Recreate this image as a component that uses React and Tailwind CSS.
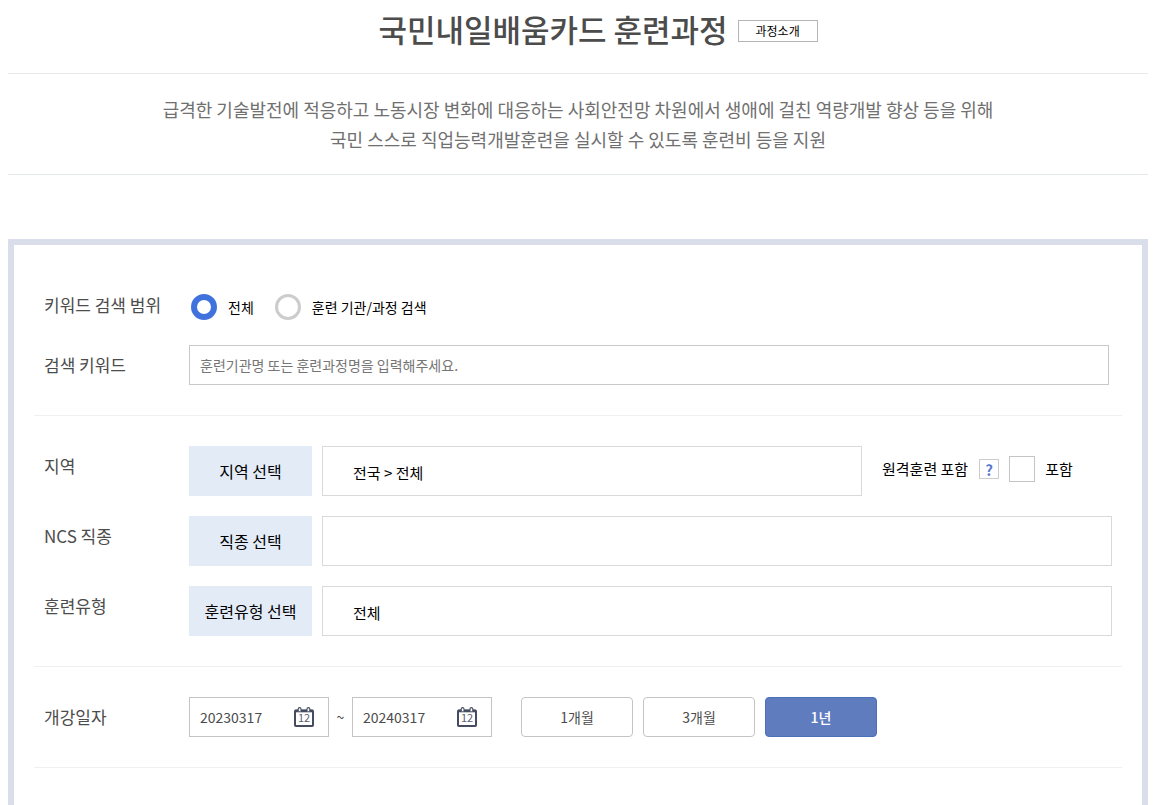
import { useState } from "react";

function CalendarIcon() {
  return (
    <svg width="20" height="20" viewBox="0 0 20 20" fill="none" aria-hidden="true">
      <rect x="1" y="3.5" width="18" height="15.5" rx="0.8" stroke="#454c5f" strokeWidth="2" />
      <path d="M1 4h18" stroke="#454c5f" strokeWidth="2.6" />
      <path d="M4.2 4.2V2a1.4 1.4 0 0 1 2.8 0v2.2M13 4.2V2a1.4 1.4 0 0 1 2.8 0v2.2" fill="#fff" stroke="#454c5f" strokeWidth="1.1" />
      <text x="10" y="15.4" textAnchor="middle" fontSize="11" fill="#5a6172">12</text>
    </svg>
  );
}

function Section({ className = "", children }) {
  return (
    <div className={`flex flex-col gap-5 border-b border-[#f0f0f0] pb-[30px] pl-[10px] ${className}`}>
      {children}
    </div>
  );
}

function Row({ label, htmlFor, children }) {
  const style = "h-10 w-[145px] shrink-0 text-[17px] leading-10 text-[#4c4c4c]";
  return (
    <div className="flex">
      {htmlFor ? (
        <label htmlFor={htmlFor} className={style}>{label}</label>
      ) : (
        <div className={style}>{label}</div>
      )}
      {children}
    </div>
  );
}

function SelectRow({ label, button, value, children }) {
  return (
    <Row label={label}>
      <div className="flex min-w-0 flex-1 pr-[10px]">
        <button type="button" className="h-[50px] w-[123px] shrink-0 bg-[#e3ebf7] text-[16px] text-black">
          {button}
        </button>
        <div className="ml-[10px] flex h-[50px] min-w-0 flex-1 items-center border border-[#d9d9d9] px-[30px] pt-1 text-[15px] text-black">
          {value}
        </div>
        {children}
      </div>
    </Row>
  );
}

function Radio({ label, checked, onChange }) {
  return (
    <label className="flex items-center gap-[11px] text-[14px] text-black">
      <input
        type="radio"
        name="scope"
        checked={checked}
        onChange={onChange}
        className="size-[26px] appearance-none rounded-full border-[3px] border-[#cccccc] bg-white checked:border-[6px] checked:border-[#4072dd]"
      />
      {label}
    </label>
  );
}

function DateField({ name, initial }) {
  return (
    <div className="flex h-10 w-[140px] items-center border border-[#c4c4c4] pr-[14px] pl-[10px]">
      <input
        type="text"
        aria-label={name}
        defaultValue={initial}
        className="min-w-0 flex-1 text-[14px] text-[#4c4c4c] outline-none"
      />
      <button type="button" aria-label={`${name} 달력`} className="shrink-0">
        <CalendarIcon />
      </button>
    </div>
  );
}

const PERIODS = ["1개월", "3개월", "1년"];

export default function App() {
  const [scope, setScope] = useState("all");
  const [period, setPeriod] = useState("1년");

  return (
    <main className="flex min-h-screen flex-col bg-white pr-[9px] pl-2 font-['Noto_Sans_CJK_KR',sans-serif]">
      <header className="flex h-[74px] items-start justify-center gap-[10px] border-b border-[#e9eaec] pt-[6px] pl-10">
        <h1 className="text-[31px] leading-[46px] font-medium text-[#4c4c4c]">국민내일배움카드 훈련과정</h1>
        <button type="button" className="mt-[14px] flex h-[22px] w-20 items-center justify-center border border-[#b5b5b5] text-[12px] text-black">
          과정소개
        </button>
      </header>

      <p className="border-b border-[#e3e8eb] py-5 text-center text-[18px] leading-[30px] text-[#707070]">
        급격한 기술발전에 적응하고 노동시장 변화에 대응하는 사회안전망 차원에서 생애에 걸친 역량개발 향상 등을 위해
        <br />
        국민 스스로 직업능력개발훈련을 실시할 수 있도록 훈련비 등을 지원
      </p>

      <form className="mt-16 flex-1 border-6 border-b-0 border-[#d9deea] px-5" onSubmit={(e) => e.preventDefault()}>
        <Section className="pt-10">
          <Row label="키워드 검색 범위">
            <div className="flex items-center gap-[21px] pt-1 pl-[2px]">
              <Radio label="전체" checked={scope === "all"} onChange={() => setScope("all")} />
              <Radio label="훈련 기관/과정 검색" checked={scope === "org"} onChange={() => setScope("org")} />
            </div>
          </Row>
          <Row label="검색 키워드" htmlFor="keyword">
            <div className="min-w-0 flex-1 pr-[13px]">
              <input
                id="keyword"
                type="text"
                placeholder="훈련기관명 또는 훈련과정명을 입력해주세요."
                className="h-10 w-full border border-[#c9c9c9] px-[10px] text-[14px] text-[#4c4c4c] outline-none placeholder:text-[#757575]"
              />
            </div>
          </Row>
        </Section>

        <Section className="pt-[30px]">
          <SelectRow label="지역" button="지역 선택" value="전국 > 전체">
            <div className="flex w-[250px] shrink-0 items-center pb-1 pl-5 text-[15px] text-black">
              <span>원격훈련 포함</span>
              <button type="button" aria-label="원격훈련 안내" className="ml-[11px] flex size-5 items-center justify-center border border-[#cccccc] text-[15px] leading-none font-bold text-[#5b78d0]">
                ?
              </button>
              <label className="ml-[10px] flex items-center gap-[10px]">
                <input type="checkbox" className="size-[26px] appearance-none border border-[#c4c4c4] bg-white checked:bg-[#4072dd]" />
                포함
              </label>
            </div>
          </SelectRow>
          <SelectRow label="NCS 직종" button="직종 선택" value="" />
          <SelectRow label="훈련유형" button="훈련유형 선택" value="전체" />
        </Section>

        <Section className="pt-[30px]">
          <Row label="개강일자">
            <div className="flex items-center text-[14px] text-[#4c4c4c]">
              <DateField name="시작일" initial="20230317" />
              <span className="w-[23px] text-center">~</span>
              <DateField name="종료일" initial="20240317" />
              <div className="ml-[29px] flex gap-[10px]">
                {PERIODS.map((item) => (
                  <button
                    key={item}
                    type="button"
                    onClick={() => setPeriod(item)}
                    className={
                      period === item
                        ? "h-10 w-28 rounded-[4px] border border-[#4c6fba] bg-[#5f7cbf] font-medium text-white"
                        : "h-10 w-28 rounded-[4px] border border-[#c4c4c4] bg-white"
                    }
                  >
                    {item}
                  </button>
                ))}
              </div>
            </div>
          </Row>
        </Section>
      </form>
    </main>
  );
}
